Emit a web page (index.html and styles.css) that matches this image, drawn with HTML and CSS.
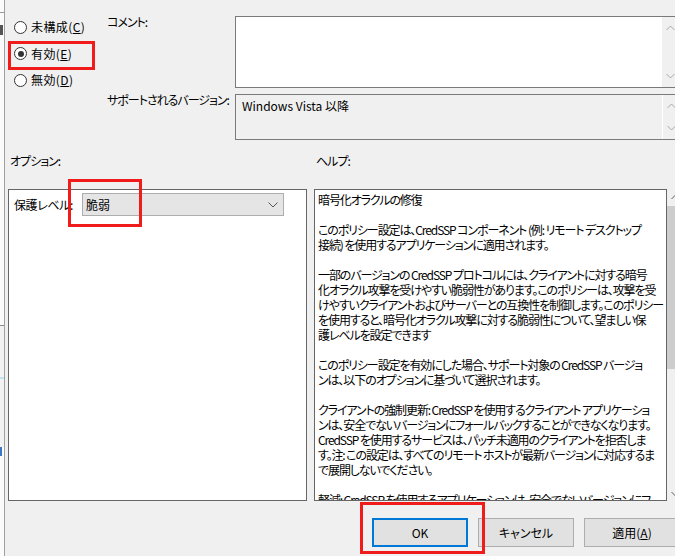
FILE: index.html
```html
<!DOCTYPE html>
<html lang="ja">
<head>
  <meta charset="UTF-8">
  <meta name="viewport" content="width=device-width, initial-scale=1.0">
  <title>暗号化オラクルの修復</title>
  <link rel="stylesheet" href="styles.css">
</head>
<body>
  <div class="screen">
    <div class="behind">
      <div class="behind-top"></div>
      <div class="behind-glyph"></div>
      <div class="behind-pane"></div>
      <div class="behind-lower"></div>
      <div class="behind-link"></div>
      <div class="behind-text"></div>
    </div>

    <div class="dialog">
      <div class="top">
        <div class="states">
          <div class="radio"><span class="radio-box"></span>未構成(<u>C</u>)</div>
          <div class="radio checked"><span class="radio-box"></span>有効(<u>E</u>)</div>
          <div class="radio"><span class="radio-box"></span>無効(<u>D</u>)</div>
        </div>
        <div class="captions">
          <div class="caption comment-caption">コメント:</div>
          <div class="caption version-caption">サポートされるバージョン:</div>
        </div>
        <div class="fields">
          <div class="field comment">
            <div class="field-body"></div>
            <div class="vscroll">
              <svg width="9" height="6" viewBox="0 0 9 6"><path d="M0.5 5 L4.5 1 L8.5 5" fill="none" stroke="#a8a8a8" stroke-width="1"/></svg>
              <svg width="9" height="6" viewBox="0 0 9 6"><path d="M0.5 1 L4.5 5 L8.5 1" fill="none" stroke="#a8a8a8" stroke-width="1"/></svg>
            </div>
          </div>
          <div class="field version">
            <div class="field-body">Windows Vista 以降</div>
            <div class="vscroll">
              <svg width="9" height="6" viewBox="0 0 9 6"><path d="M0.5 5 L4.5 1 L8.5 5" fill="none" stroke="#a8a8a8" stroke-width="1"/></svg>
              <svg width="9" height="6" viewBox="0 0 9 6"><path d="M0.5 1 L4.5 5 L8.5 1" fill="none" stroke="#a8a8a8" stroke-width="1"/></svg>
            </div>
          </div>
        </div>
      </div>

      <div class="pane-titles">
        <span class="options-title">オプション:</span>
        <span class="help-title">ヘルプ:</span>
      </div>

      <div class="panes">
        <div class="options">
          <div class="option-row">
            <span class="option-label">保護レベル:</span>
            <div class="select">
              <span>脆弱</span>
              <svg width="10" height="6" viewBox="0 0 10 6"><path d="M0.5 0.5 L5 5 L9.5 0.5" fill="none" stroke="#555" stroke-width="1"/></svg>
            </div>
          </div>
        </div>
        <div class="help">
          <p>暗号化オラクルの修復</p>
          <p>&nbsp;</p>
          <p>このポリシー設定は、CredSSP コンポーネント (例: リモート デスクトップ</p>
          <p>接続) を使用するアプリケーションに適用されます。</p>
          <p>&nbsp;</p>
          <p>一部のバージョンの CredSSP プロトコルには、クライアントに対する暗号</p>
          <p>化オラクル攻撃を受けやすい脆弱性があります。このポリシーは、攻撃を受</p>
          <p>けやすいクライアントおよびサーバーとの互換性を制御します。このポリシー</p>
          <p>を使用すると、暗号化オラクル攻撃に対する脆弱性について、望ましい保</p>
          <p>護レベルを設定できます</p>
          <p>&nbsp;</p>
          <p>このポリシー設定を有効にした場合、サポート対象の CredSSP バージョ</p>
          <p>ンは、以下のオプションに基づいて選択されます。</p>
          <p>&nbsp;</p>
          <p>クライアントの強制更新: CredSSP を使用するクライアント アプリケーショ</p>
          <p>ンは、安全でないバージョンにフォールバックすることができなくなります。</p>
          <p>CredSSP を使用するサービスは、パッチ未適用のクライアントを拒否しま</p>
          <p>す。注: この設定は、すべてのリモート ホストが最新バージョンに対応するま</p>
          <p>で展開しないでください。</p>
          <p>&nbsp;</p>
          <p>軽減: CredSSP を使用するアプリケーションは、安全でないバージョンにフ</p>
        </div>
        <div class="help-scroll">
          <svg width="9" height="6" viewBox="0 0 9 6"><path d="M0.5 5 L4.5 1 L8.5 5" fill="none" stroke="#606060" stroke-width="1"/></svg>
          <div class="thumb"></div>
          <div class="track"></div>
          <svg width="9" height="6" viewBox="0 0 9 6"><path d="M0.5 1 L4.5 5 L8.5 1" fill="none" stroke="#606060" stroke-width="1"/></svg>
        </div>
      </div>

      <div class="buttons">
        <button class="btn default">OK</button>
        <button class="btn">キャンセル</button>
        <button class="btn">適用(<u>A</u>)</button>
      </div>
    </div>

    <!-- red annotation boxes -->
    <div class="mark mark-enabled"></div>
    <div class="mark mark-select"></div>
    <div class="mark mark-ok"></div>
  </div>
</body>
</html>
```

FILE: styles.css
```css
body {
  margin: 0;
  padding: 0;
  background-color: #f0f0f0;
  font-family: "Noto Sans CJK JP", "Liberation Sans", sans-serif;
  font-size: 12px;
  font-feature-settings: "palt";
  color: #000;
  overflow: hidden;
}

.screen {
  position: relative;
  display: flex;
  width: 675px;
  height: 556px;
  overflow: hidden;
}

/* window behind the dialog */
.behind {
  width: 4px;
  flex-shrink: 0;
  border-right: 1px solid #a0a0a0;
  background-color: #fbfbfb;
  display: flex;
  flex-direction: column;
}

.behind-top {
  height: 12px;
  border-bottom: 1px solid #9a9a9a;
}

.behind-glyph {
  height: 10px;
  margin-top: 12px;
  width: 3px;
  background-color: #555;
}

.behind-pane {
  height: 290px;
  border-bottom: 1px solid #8a8a8a;
}

.behind-lower {
  height: 51px;
  background-color: #f2f2f2;
  border-bottom: 2px solid #bfe3ef;
}

.behind-link {
  height: 68px;
  background-color: #f2f2f2;
}

.behind-text {
  height: 9px;
  width: 2px;
  background-color: #3b78c4;
}

.dialog {
  flex: 1;
  display: flex;
  flex-direction: column;
  min-width: 0;
}

.top {
  display: flex;
  height: 140px;
}

.states {
  width: 102px;
  flex-shrink: 0;
  padding-top: 20px;
  padding-left: 9px;
  box-sizing: border-box;
  display: flex;
  flex-direction: column;
  gap: 12.5px;
}

.radio {
  display: flex;
  align-items: center;
  height: 14px;
  line-height: 14px;
  white-space: nowrap;
  letter-spacing: 0.4px;
}

.radio-box {
  width: 13px;
  height: 13px;
  box-sizing: border-box;
  border: 1px solid #333;
  border-radius: 50%;
  background-color: #fff;
  margin-right: 4px;
  display: flex;
  align-items: center;
  justify-content: center;
}

.radio.checked .radio-box::after {
  content: "";
  width: 6px;
  height: 6px;
  border-radius: 50%;
  background-color: #333;
}

.captions {
  width: 128px;
  flex-shrink: 0;
}

.caption {
  line-height: 16px;
  white-space: nowrap;
  letter-spacing: -1px;
}

.comment-caption {
  margin-top: 14px;
}

.version-caption {
  margin-top: 62px;
}

.fields {
  width: 445px;
  flex-shrink: 0;
}

.field {
  display: flex;
  border: 1px solid #7a7a7a;
  box-sizing: border-box;
}

.field.comment {
  margin-top: 16px;
  height: 72px;
  background-color: #fff;
}

.field.version {
  margin-top: 6px;
  height: 46px;
  background-color: #f0f0f0;
}

.field-body {
  flex: 1;
  padding: 3px 6px;
  line-height: 16px;
}

.vscroll {
  width: 17px;
  display: flex;
  flex-direction: column;
  align-items: center;
  justify-content: space-between;
  padding: 8px 0;
  box-sizing: border-box;
  background-color: #f0f0f0;
}

.field.version .vscroll {
  border-left: 1px solid #fff;
}

.pane-titles {
  display: flex;
  height: 49px;
  padding-top: 13px;
  box-sizing: border-box;
  line-height: 16px;
  letter-spacing: -1px;
}

.options-title {
  margin-left: 5px;
  width: 306px;
}

.panes {
  display: flex;
  height: 312px;
}

.options {
  flex-shrink: 0;
  margin-left: 3px;
  width: 299px;
  box-sizing: border-box;
  border: 1px solid #666;
  background-color: #fff;
  padding: 3px 0 0 5px;
}

.option-row {
  display: flex;
  align-items: center;
}

.option-label {
  width: 68px;
  white-space: nowrap;
  letter-spacing: -0.4px;
}

.select {
  width: 202px;
  height: 23px;
  box-sizing: border-box;
  border: 1px solid #adadad;
  background-color: #e5e5e5;
  display: flex;
  align-items: center;
  justify-content: space-between;
  padding: 0 5px 0 3px;
}

.help {
  flex-shrink: 0;
  margin-left: 7px;
  width: 353px;
  box-sizing: border-box;
  border: 1px solid #666;
  background-color: #fff;
  padding: 2px 0 0 3px;
  overflow: hidden;
  white-space: nowrap;
}

.help p {
  margin: 0;
  line-height: 15px;
  letter-spacing: -1.1px;
}

.help-scroll {
  width: 17px;
  flex-shrink: 0;
  display: flex;
  flex-direction: column;
  align-items: center;
  padding: 5px 0 4px;
  box-sizing: border-box;
  background-color: #f0f0f0;
}

.help-scroll .thumb {
  margin-top: 6px;
  width: 17px;
  height: 163px;
  background-color: #cdcdcd;
}

.help-scroll .track {
  flex: 1;
}

.buttons {
  display: flex;
  gap: 10px;
  padding-left: 367px;
  margin-top: 17px;
}

.btn {
  width: 96px;
  height: 29px;
  flex-shrink: 0;
  box-sizing: border-box;
  border: 1px solid #adadad;
  background-color: #e1e1e1;
  font-family: inherit;
  font-size: 12px;
  font-feature-settings: "palt";
  color: #000;
  padding: 0;
}

.btn.default {
  border: 2px solid #0078d7;
}

.mark {
  position: absolute;
  border: 3px solid #f01c1c;
  box-sizing: border-box;
}

.mark-enabled {
  left: 8px;
  top: 41px;
  width: 87px;
  height: 29px;
}

.mark-select {
  left: 68px;
  top: 179px;
  width: 74px;
  height: 48px;
}

.mark-ok {
  left: 360px;
  top: 502px;
  width: 125px;
  height: 52px;
}
```
